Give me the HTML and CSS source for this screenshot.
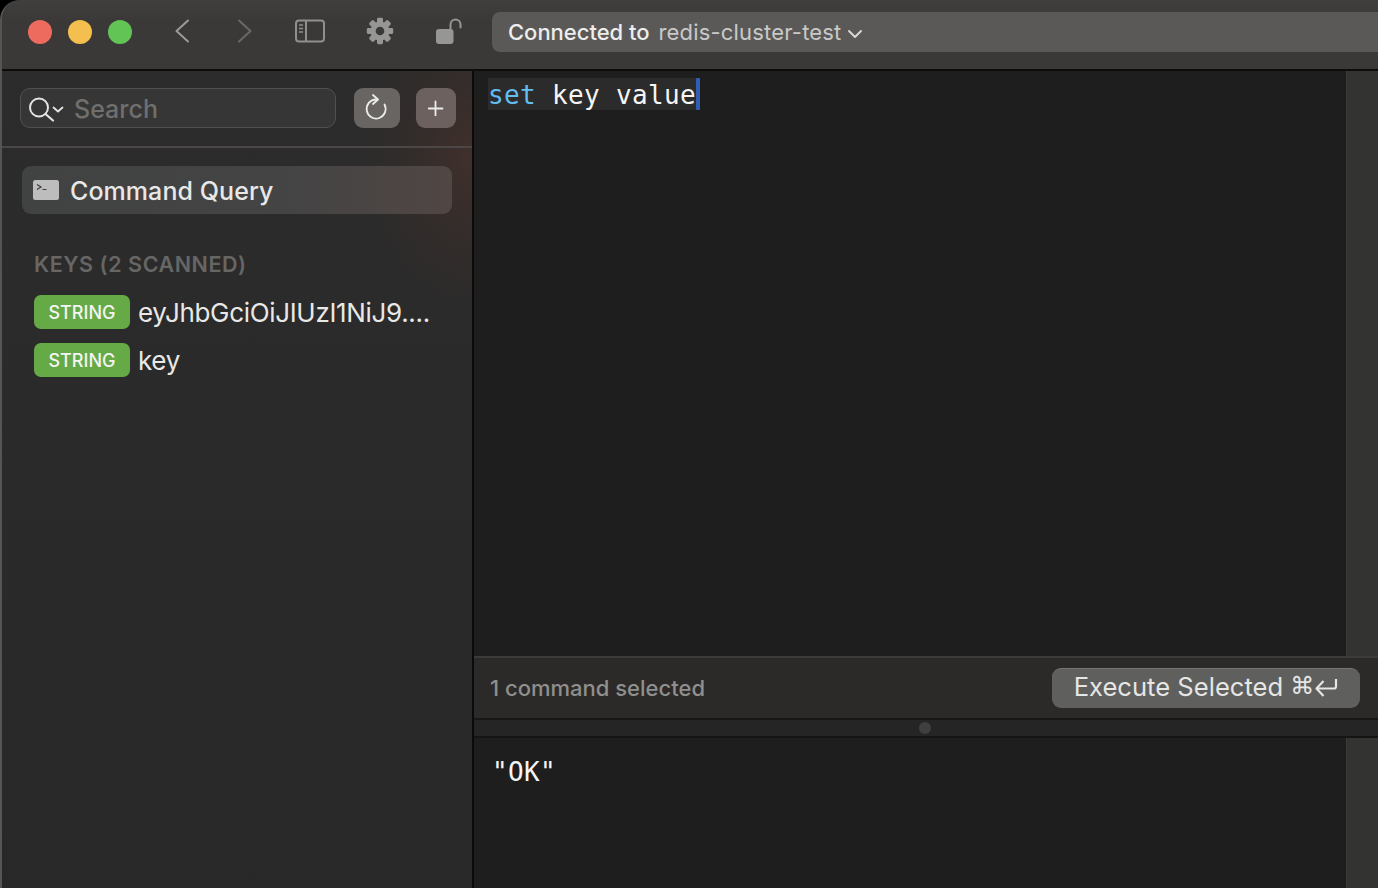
FILE: index.html
```html
<!DOCTYPE html>
<html lang="en">
<head>
<meta charset="utf-8">
<title>Redis client</title>
<link rel="stylesheet" href="styles.css">
</head>
<body>
<div class="window">
  <header class="titlebar">
    <div class="lights">
      <span class="light red"></span>
      <span class="light yellow"></span>
      <span class="light green"></span>
    </div>
    <div class="tools">
      <svg class="tool-back" width="18" height="24" viewBox="0 0 18 24"><path d="M14 1.500 2.500 12 14 22.500" fill="none" stroke="#9a9a99" stroke-width="2" stroke-linecap="round" stroke-linejoin="round"/></svg>
      <svg class="tool-forward" width="18" height="24" viewBox="0 0 18 24"><path d="M3 1.500 14.500 12 3 22.500" fill="none" stroke="#686867" stroke-width="2" stroke-linecap="round" stroke-linejoin="round"/></svg>
      <svg class="tool-sidebar" width="30" height="24" viewBox="0 0 30 24"><rect x="1" y="1.500" width="28" height="21" rx="3" fill="none" stroke="#8f8f8e" stroke-width="2"/><path d="M11 1.500v21" stroke="#8f8f8e" stroke-width="2"/><path d="M4 6h4M4 9.500h4M4 13h4" stroke="#8f8f8e" stroke-width="1.400"/></svg>
      <svg class="tool-gear" width="28" height="28" viewBox="0 0 28 28"><g fill="#969695"><circle cx="14" cy="14" r="9.500"/><rect x="11" y="0.800" width="6" height="26.400" rx="1.400"/><rect x="11" y="0.800" width="6" height="26.400" rx="1.400" transform="rotate(45 14 14)"/><rect x="11" y="0.800" width="6" height="26.400" rx="1.400" transform="rotate(90 14 14)"/><rect x="11" y="0.800" width="6" height="26.400" rx="1.400" transform="rotate(135 14 14)"/></g><circle cx="14" cy="14" r="4.300" fill="#3a3937"/></svg>
      <svg class="tool-lock" width="28" height="28" viewBox="0 0 28 28"><rect x="0" y="12" width="17.500" height="15" rx="3" fill="#969695"/><path d="M14.500 12V7.500a5 5 0 0 1 10 0V10.500" fill="none" stroke="#969695" stroke-width="2" stroke-linecap="round"/></svg>
    </div>
    <div class="connection">
      <span class="conn-label">Connected to</span>
      <span class="conn-name">redis-cluster-test</span>
      <svg width="16" height="10" viewBox="0 0 16 10"><path d="M2 2l6 6 6-6" fill="none" stroke="#d6d6d4" stroke-width="2" stroke-linecap="round" stroke-linejoin="round"/></svg>
    </div>
  </header>
  <main class="main">
    <aside class="sidebar">
      <div class="search-row">
        <div class="search">
          <svg width="38" height="28" viewBox="0 0 38 28"><circle cx="10" cy="13.500" r="9" fill="none" stroke="#e4e4e3" stroke-width="2"/><path d="M16.500 20l7.500 6.500" stroke="#e4e4e3" stroke-width="2.200" stroke-linecap="round"/><path d="M24.500 13.500l4.500 4 4.500-4" fill="none" stroke="#e4e4e3" stroke-width="1.800" stroke-linecap="round" stroke-linejoin="round"/></svg>
          <span class="search-text">Search</span>
        </div>
        <button class="square refresh"><svg width="24" height="28" viewBox="0 0 24 28"><path d="M12 5.500A9.500 9.500 0 1 0 20.500 10.500" fill="none" stroke="#ececeb" stroke-width="1.800" stroke-linecap="round" transform="translate(-1 0)"/><path d="M9 1l5 4.500-5 4.500" fill="none" stroke="#ececeb" stroke-width="1.800" stroke-linecap="round" stroke-linejoin="round" transform="translate(-1 0)"/></svg></button>
        <button class="square add"><svg width="16" height="16" viewBox="0 0 16 16"><path d="M8 1v14M1 8h14" stroke="#ececeb" stroke-width="1.800" stroke-linecap="round" transform="translate(-.5 .5)"/></svg></button>
      </div>
      <div class="rule"></div>
      <nav class="nav">
        <div class="nav-item">
          <svg width="26" height="20" viewBox="0 0 26 20"><rect width="26" height="20" rx="2.500" fill="#bdbdbd"/><path d="M4 4.500l4 2.500-4 2.500M9.500 9.500h4" fill="none" stroke="#3c3c3c" stroke-width="1.200"/></svg>
          <span class="nav-label">Command Query</span>
        </div>
      </nav>
      <h2 class="section">KEYS (2 SCANNED)</h2>
      <ul class="keys">
        <li class="key"><span class="badge">STRING</span><span class="key-name">eyJhbGciOiJIUzI1NiJ9....</span></li>
        <li class="key"><span class="badge">STRING</span><span class="key-name">key</span></li>
      </ul>
    </aside>
    <section class="content">
      <div class="pane editor">
        <div class="code">
          <div class="code-line"><span class="kw">set</span> key value<span class="caret"></span></div>
        </div>
        <div class="gutter"></div>
      </div>
      <div class="toolbar">
        <span class="status">1 command selected</span>
        <button class="execute"><span class="exec-label">Execute Selected </span><span class="cmd">⌘</span><svg width="24" height="22" viewBox="0 0 24 22"><path d="M22 2v7.500a2 2 0 0 1-2 2H2.500M9.500 4l-7 7.500 7 7.500" fill="none" stroke="#e6e6e5" stroke-width="2.200" stroke-linejoin="round"/></svg></button>
      </div>
      <div class="splitter"><span class="dot"></span></div>
      <div class="pane output">
        <div class="code result">"OK"</div>
        <div class="gutter"></div>
      </div>
    </section>
  </main>
</div>
</body>
</html>
```
FILE: styles.css
```css
* { box-sizing: border-box; }
html, body { margin: 0; height: 100%; background: #000; overflow: hidden; }
body { font-family: Inter, "Liberation Sans", sans-serif; color: #e8e8e7; }
.window { width: 1378px; height: 888px; display: flex; flex-direction: column; border-top-left-radius: 20px; overflow: hidden; border-left: 2px solid #555; background: #2a2a2a; }
.titlebar { height: 71px; flex: none; display: flex; align-items: flex-start; background: linear-gradient(#403f3d, #3a3937 30%); border-bottom: 2px solid #0d0d0d; padding: 12px 0 0 26px; }
.lights { display: flex; gap: 16px; padding-top: 8px; }
.light { width: 24px; height: 24px; border-radius: 50%; }
.red { background: #ed6a5e; }
.yellow { background: #f5bf4f; }
.green { background: #61c454; }
.tools { display: flex; align-items: center; height: 38px; margin-left: 42px; }
.tool-forward { margin-left: 44px; }
.tool-sidebar { margin-left: 41px; }
.tool-gear { margin-left: 41px; }
.tool-lock { margin-left: 42px; }
.connection { margin-left: 28px; flex: 1; height: 40px; background: #5a5958; border-radius: 8px 0 0 8px; display: flex; align-items: center; padding-left: 16px; font-size: 22px; }
.conn-label { color: #ededec; font-weight: 500; letter-spacing: -.02px; }
.conn-name { color: #c9c9c8; margin-left: 9px; letter-spacing: .18px; }
.connection svg { margin-left: 5px; margin-top: 4px; }
.main { flex: 1; display: flex; min-height: 0; }
.sidebar { width: 472px; flex: none; border-right: 2px solid #0a0a0a; background: radial-gradient(ellipse 110px 160px at 100% 85px, #40302c 0, #322c2a 55%, rgba(42, 42, 42, 0) 100%), linear-gradient(#2c2c2c, #2a2a2a 50%, #272827); }
.search-row { height: 75px; display: flex; align-items: center; padding: 0 16px 2px 18px; }
.search { width: 316px; height: 40px; border-radius: 10px; background: #363636; border: 1px solid #515151; display: flex; align-items: center; padding-left: 8px; }
.search-text { color: #6f6f6e; font-size: 25px; font-weight: 500; margin: 2px 0 0 7px; }
.square { height: 40px; border: 0; padding: 0; border-radius: 9px; display: flex; align-items: center; justify-content: center; }
.refresh { width: 46px; margin-left: 18px; background: #686563; }
.add { width: 40px; margin-left: 16px; background: #6c615e; }
.rule { height: 2px; background: #4a4746; }
.nav { padding: 18px 20px 0; }
.nav-item { height: 48px; border-radius: 9px; background: linear-gradient(90deg, #414242 0, #444444 60%, #504644 100%); display: flex; align-items: center; padding-left: 11px; gap: 11px; font-size: 25px; font-weight: 500; color: #e8e8e7; }
.nav-label { letter-spacing: .07px; margin-top: 2px; }
.section { margin: 36px 0 0 32px; font-size: 21.500px; line-height: 28px; font-weight: 600; color: #666665; letter-spacing: .55px; }
.keys { list-style: none; margin: 17px 0 0 32px; padding: 0; display: flex; flex-direction: column; gap: 14px; }
.key { display: flex; align-items: center; gap: 8px; height: 34px; }
.badge { width: 96px; height: 34px; background: #65aa46; border-radius: 7px; color: #f4f4f2; font-size: 18px; font-weight: 500; display: flex; align-items: center; justify-content: center; }
.key-name { font-size: 26px; color: #e8e8e7; letter-spacing: -.33px; }
.content { flex: 1; min-width: 0; display: flex; flex-direction: column; background: #1e1e1e; }
.pane { display: flex; min-height: 0; background: #1e1e1e; }
.editor { flex: 1; }
.output { height: 150px; flex: none; }
.code { flex: 1; font-family: "DejaVu Sans Mono", "Liberation Mono", monospace; font-size: 26px; letter-spacing: .34px; color: #f5f5f5; }
.editor .code { padding: 7px 0 0 14px; }
.code-line { display: inline-block; height: 32px; line-height: 35px; background: #2b2b2b; position: relative; white-space: pre; }
.kw { color: #62bdf0; }
.caret { position: absolute; right: -4px; top: 0; width: 4px; height: 32px; background: #2f5fb5; border-radius: 1px; }
.result { padding: 18px 0 0 18px; line-height: 32px; }
.gutter { width: 32px; flex: none; background: #333332; border-left: 1px solid #3b3b3a; }
.toolbar { height: 64px; flex: none; background: #2b2a28; border-top: 2px solid #3b3b39; border-bottom: 2px solid #171717; display: flex; align-items: center; justify-content: space-between; padding: 0 18px 0 16px; }
.status { font-size: 22px; font-weight: 500; color: #8f8f8d; }
.execute { width: 308px; height: 40px; border: 0; border-top: 1px solid #757574; border-radius: 9px; background: #5f5f5e; color: #e6e6e5; font-family: inherit; font-size: 25.600px; display: flex; align-items: center; justify-content: center; padding: 0 0 5px; white-space: pre; }
.cmd { font-family: "DejaVu Sans", sans-serif; font-size: 24px; }
.execute svg { margin-top: 3px; }
.splitter { height: 18px; flex: none; background: #252525; border-bottom: 2px solid #141414; display: flex; align-items: center; justify-content: center; }
.dot { width: 12px; height: 12px; border-radius: 50%; background: #3f3f3f; margin-right: 2px; }
```
